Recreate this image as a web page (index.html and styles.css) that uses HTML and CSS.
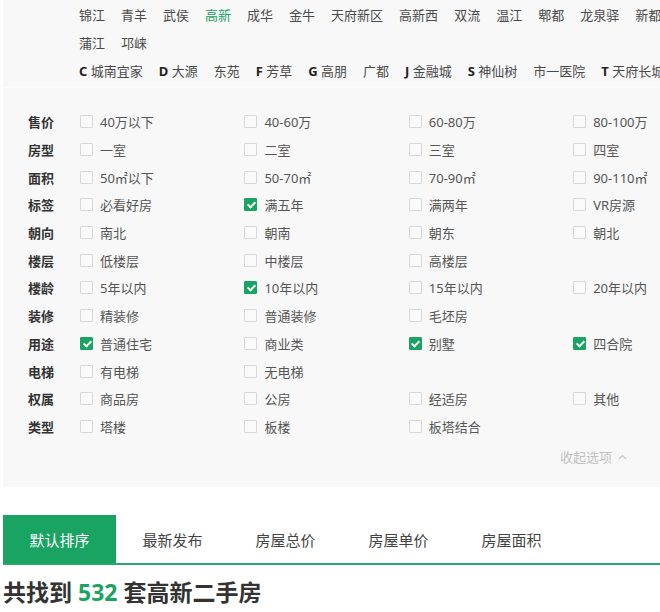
FILE: index.html
```html
<!DOCTYPE html>
<html lang="zh-CN">
<head>
<meta charset="utf-8">
<title>高新二手房</title>
<link rel="stylesheet" href="styles.css">
</head>
<body>
<div class="panel">
  <div class="districts">
    <div class="drow">
      <span>锦江</span><span>青羊</span><span>武侯</span><span class="active">高新</span><span>成华</span><span>金牛</span><span>天府新区</span><span>高新西</span><span>双流</span><span>温江</span><span>郫都</span><span>龙泉驿</span><span>新都</span>
    </div>
    <div class="drow">
      <span>蒲江</span><span>邛崃</span>
    </div>
    <div class="drow">
      <span><b>C</b> 城南宜家</span><span><b>D</b> 大源</span><span>东苑</span><span><b>F</b> 芳草</span><span><b>G</b> 高朋</span><span>广都</span><span><b>J</b> 金融城</span><span><b>S</b> 神仙树</span><span>市一医院</span><span><b>T</b> 天府长城</span>
    </div>
  </div>

  <div class="filters">
    <div class="frow"><div class="label">售价</div>
      <div class="opt"><i class="cb"></i>40万以下</div><div class="opt"><i class="cb"></i>40-60万</div><div class="opt"><i class="cb"></i>60-80万</div><div class="opt"><i class="cb"></i>80-100万</div></div>
    <div class="frow"><div class="label">房型</div>
      <div class="opt"><i class="cb"></i>一室</div><div class="opt"><i class="cb"></i>二室</div><div class="opt"><i class="cb"></i>三室</div><div class="opt"><i class="cb"></i>四室</div></div>
    <div class="frow"><div class="label">面积</div>
      <div class="opt"><i class="cb"></i>50㎡以下</div><div class="opt"><i class="cb"></i>50-70㎡</div><div class="opt"><i class="cb"></i>70-90㎡</div><div class="opt"><i class="cb"></i>90-110㎡</div></div>
    <div class="frow"><div class="label">标签</div>
      <div class="opt"><i class="cb"></i>必看好房</div><div class="opt"><i class="cb on"></i>满五年</div><div class="opt"><i class="cb"></i>满两年</div><div class="opt"><i class="cb"></i>VR房源</div></div>
    <div class="frow"><div class="label">朝向</div>
      <div class="opt"><i class="cb"></i>南北</div><div class="opt"><i class="cb"></i>朝南</div><div class="opt"><i class="cb"></i>朝东</div><div class="opt"><i class="cb"></i>朝北</div></div>
    <div class="frow"><div class="label">楼层</div>
      <div class="opt"><i class="cb"></i>低楼层</div><div class="opt"><i class="cb"></i>中楼层</div><div class="opt"><i class="cb"></i>高楼层</div></div>
    <div class="frow"><div class="label">楼龄</div>
      <div class="opt"><i class="cb"></i>5年以内</div><div class="opt"><i class="cb on"></i>10年以内</div><div class="opt"><i class="cb"></i>15年以内</div><div class="opt"><i class="cb"></i>20年以内</div></div>
    <div class="frow"><div class="label">装修</div>
      <div class="opt"><i class="cb"></i>精装修</div><div class="opt"><i class="cb"></i>普通装修</div><div class="opt"><i class="cb"></i>毛坯房</div></div>
    <div class="frow"><div class="label">用途</div>
      <div class="opt"><i class="cb on"></i>普通住宅</div><div class="opt"><i class="cb"></i>商业类</div><div class="opt"><i class="cb on"></i>别墅</div><div class="opt"><i class="cb on"></i>四合院</div></div>
    <div class="frow"><div class="label">电梯</div>
      <div class="opt"><i class="cb"></i>有电梯</div><div class="opt"><i class="cb"></i>无电梯</div></div>
    <div class="frow"><div class="label">权属</div>
      <div class="opt"><i class="cb"></i>商品房</div><div class="opt"><i class="cb"></i>公房</div><div class="opt"><i class="cb"></i>经适房</div><div class="opt"><i class="cb"></i>其他</div></div>
    <div class="frow"><div class="label">类型</div>
      <div class="opt"><i class="cb"></i>塔楼</div><div class="opt"><i class="cb"></i>板楼</div><div class="opt"><i class="cb"></i>板塔结合</div></div>
  </div>

  <div class="collapse">收起选项<svg class="caret" width="9" height="6" viewBox="0 0 9 6"><path d="M1 5 L4.5 1.5 L8 5" fill="none" stroke="#c4c4c4" stroke-width="1.2"/></svg></div>
</div>

<div class="tabs">
  <div class="tab active">默认排序</div>
  <div class="tab">最新发布</div>
  <div class="tab">房屋总价</div>
  <div class="tab">房屋单价</div>
  <div class="tab">房屋面积</div>
</div>

<h2 class="total">共找到 <span class="num">532</span> 套高新二手房</h2>
</body>
</html>
```

FILE: styles.css
```css
html, body {
  margin: 0;
  padding: 0;
  background: #ffffff;
  overflow: hidden;
}
body {
  font-family: "Noto Sans", "Noto Sans CJK SC", sans-serif;
  color: #444;
  width: 660px;
}
.panel {
  margin-left: 3px;
  background: #f8f8f8;
  height: 487px;
  overflow: hidden;
}
.districts {
  padding-left: 76px;
  padding-bottom: 3px;
  border-bottom: 1px solid #fdfdfd;
}
.drow {
  display: flex;
  white-space: nowrap;
  height: 28px;
  align-items: center;
  font-size: 13px;
  color: #4a4a4a;
}
.drow span {
  margin-right: 16px;
  flex: none;
}
.drow .active {
  color: #1aa463;
}
.drow b {
  color: #222;
  font-weight: 700;
}
.filters {
  padding: 20px 0 0 25px;
}
.frow {
  display: flex;
  align-items: center;
  height: 27.7px;
  font-size: 13px;
}
.label {
  width: 52px;
  font-weight: 700;
  color: #333;
  flex: none;
}
.opt {
  width: 164.4px;
  flex: none;
  display: flex;
  align-items: center;
  color: #555;
}
.cb {
  width: 11px;
  height: 11px;
  border: 1px solid #d8d8d8;
  background: #fafafa;
  margin-right: 7px;
  flex: none;
  position: relative;
  border-radius: 1px;
}
.cb.on {
  background: #1aa463;
  border-color: #1aa463;
}
.cb.on::after {
  content: "";
  position: absolute;
  left: 3.5px;
  top: 1px;
  width: 3px;
  height: 6px;
  border: solid #fff;
  border-width: 0 2px 2px 0;
  transform: rotate(45deg);
}
.collapse {
  display: flex;
  justify-content: flex-end;
  align-items: center;
  padding-right: 33px;
  margin-top: 7px;
  font-size: 13px;
  color: #c0c0c0;
}
.caret {
  margin-left: 6px;
}
.tabs {
  display: flex;
  margin: 28px 0 0 3px;
  border-bottom: 2px solid #2aa86c;
}
.tab {
  width: 113px;
  height: 48px;
  display: flex;
  align-items: center;
  justify-content: center;
  font-size: 15px;
  color: #444;
}
.tab.active {
  background: #1aa463;
  color: #fff;
}
.total {
  margin: 11px 0 0 3px;
  font-size: 23px;
  font-weight: 700;
  color: #333;
  line-height: 32px;
}
.total .num {
  color: #1aa463;
}
```
